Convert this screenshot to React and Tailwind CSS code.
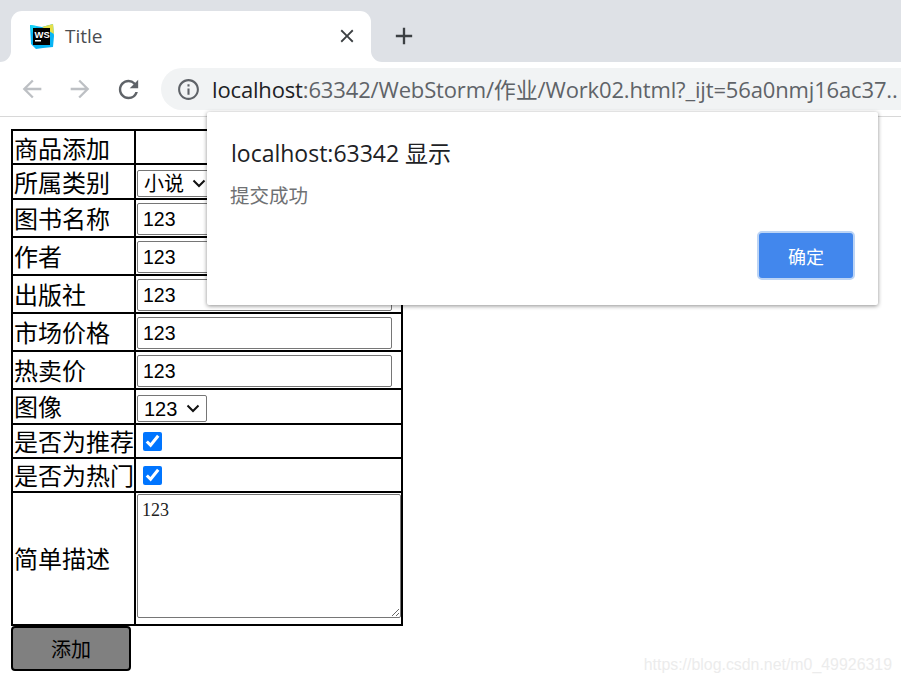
import React from "react";
import { MdArrowBack, MdArrowForward, MdRefresh, MdInfoOutline, MdClose, MdAdd } from "react-icons/md";

const cjk = "font-['Liberation_Sans','Noto_Sans_CJK_SC',sans-serif]";

const TextInput = () => (
  <input
    type="text"
    defaultValue="123"
    className="block w-[255px] h-[32px] mt-[2px] border border-[#767676] rounded-[2px] px-[5px] text-[19.5px] text-black outline-none"
  />
);

const Select = ({ children, wide }) => (
  <div className={`relative h-[27px] mt-[4px] ${wide ? "w-[80px]" : "w-[70px]"}`}>
    <select
      defaultValue={children}
      className="block appearance-none w-full h-full border border-[#767676] rounded-[2px] pl-[6px] text-[20px] text-black bg-white outline-none"
    >
      <option>{children}</option>
    </select>
    <svg
      width="14"
      height="9"
      viewBox="0 0 14 9"
      className={`absolute top-[9px] pointer-events-none ${wide ? "left-[55px]" : "left-[49px]"}`}
    >
      <path d="M1.5 1.5 L7 7 L12.5 1.5" fill="none" stroke="#111" strokeWidth="2" />
    </svg>
  </div>
);

const Check = () => (
  <input
    type="checkbox"
    defaultChecked
    className="block w-[19px] h-[19px] ml-[6px] accent-[#0075ff]"
  />
);

const rows = [
  { label: "商品添加", height: "h-[34px]", field: null, pad: "pt-[5px]" },
  { label: "所属类别", height: "h-[35px]", field: <Select wide>小说</Select>, pad: "pt-[4px]" },
  { label: "图书名称", height: "h-[38px]", field: <TextInput />, pad: "pt-[4px]" },
  { label: "作者", height: "h-[38px]", field: <TextInput />, pad: "pt-[4px]" },
  { label: "出版社", height: "h-[38px]", field: <TextInput />, pad: "pt-[4px]" },
  { label: "市场价格", height: "h-[38px]", field: <TextInput />, pad: "pt-[4px]" },
  { label: "热卖价", height: "h-[38px]", field: <TextInput />, pad: "pt-[4px]" },
  { label: "图像", height: "h-[35px]", field: <Select>123</Select>, pad: "pt-[2px]" },
  { label: "是否为推荐", height: "h-[34px]", field: <Check />, pad: "pt-[4px]" },
  { label: "是否为热门", height: "h-[34px]", field: <Check />, pad: "pt-[4px]" },
  {
    label: "简单描述",
    height: "h-[133px]",
    pad: "pt-[2px]",
    top: true,
    field: (
      <textarea
        defaultValue="123"
        className="block w-[264px] h-[124px] mt-[1px] border border-[#767676] rounded-[2px] px-[4px] py-[3px] text-[18px] leading-[24px] text-[#222] font-['Liberation_Serif',serif] outline-none"
      />
    ),
  },
];

const WsLogo = () => (
  <svg width="26" height="26" viewBox="0 0 26 26" className="shrink-0">
    <path d="M1 1 L13 3 L24 0 L25 12 L24 23 L14 24 L7 25 L2 20 Z" fill="#08b4f4" />
    <path d="M13 3 L24 0 L25 10 Z" fill="#e5e04a" />
    <path d="M1 1 L8 2 L3 9 Z" fill="#17d3f5" />
    <rect x="4" y="4" width="17" height="17" fill="#000" />
    <rect x="6" y="16" width="6" height="1.5" fill="#fff" />
    <text x="5.5" y="13.5" fontSize="9.5" fontWeight="700" fill="#fff" fontFamily="Liberation Sans, sans-serif">
      WS
    </text>
  </svg>
);

const Tab = () => (
  <div className="relative flex items-center w-[360px] h-[51px] bg-white rounded-t-[11px] pl-[18px] pr-[13px]">
    <div className="absolute left-[-11px] bottom-0 w-[11px] h-[11px] bg-white">
      <div className="w-full h-full bg-[#dee1e6] rounded-br-[11px]" />
    </div>
    <div className="absolute right-[-11px] bottom-0 w-[11px] h-[11px] bg-white">
      <div className="w-full h-full bg-[#dee1e6] rounded-bl-[11px]" />
    </div>
    <WsLogo />
    <span className="ml-[10px] text-[19px] text-[#4a4d51] font-['Open_Sans',sans-serif]">Title</span>
    <MdClose className="ml-auto mb-[1px] text-[#3c4043]" size={22} />
  </div>
);

const Dialog = () => (
  <div className="absolute left-[207px] top-[112px] w-[671px] h-[193px] bg-white rounded-[2px] shadow-[0_1px_4px_rgba(0,0,0,0.45)] pl-[24px] pr-[23px] pt-[26px]">
    <div className="text-[23px] leading-[30px] text-[#202124] font-['Open_Sans','Noto_Sans_CJK_SC',sans-serif]">
      localhost:63342 显示
    </div>
    <div className={`-ml-[1px] mt-[15px] text-[19.5px] leading-[26px] text-[#6f7174] ${cjk}`}>提交成功</div>
    <div className="flex justify-end mt-[22px]">
      <button className="w-[98px] h-[49px] pt-[1px] bg-[#4287ed] border-2 border-[#bcd4f5] rounded-[5px] text-white text-[18px] font-['Noto_Sans_CJK_SC',sans-serif]">
        确定
      </button>
    </div>
  </div>
);

export default function App() {
  return (
    <div className={`relative w-[901px] h-[681px] overflow-hidden bg-white ${cjk}`}>
      <div className="flex items-end h-[62px] bg-[#dee1e6] pl-[11px]">
        <Tab />
        <MdAdd className="ml-[19px] mb-[12px] text-[#3c4043]" size={28} />
      </div>

      <div className="flex items-center h-[55px] bg-white border-b border-[#d8d8d8] pl-[18px]">
        <MdArrowBack className="text-[#bdc0c4]" size={28} />
        <MdArrowForward className="ml-[20px] text-[#bdc0c4]" size={28} />
        <MdRefresh className="ml-[20px] text-[#5f6368]" size={29} />
        <div className="flex items-center flex-1 h-[42px] ml-[18px] bg-[#f1f3f4] rounded-l-[21px] pl-[15px] overflow-hidden">
          <MdInfoOutline className="shrink-0 text-[#5f6368]" size={25} />
          <div className="ml-[11px] whitespace-nowrap text-[22px] text-[#5f6368] font-['Open_Sans','Noto_Sans_CJK_SC',sans-serif] tracking-[-0.15px]">
            <span className="text-[#202124]">localhost</span>:63342/WebStorm/作业/Work02.html?_ijt=56a0nmj16ac37..
          </div>
        </div>
      </div>

      <table className="ml-[11px] mt-[12px] border-collapse text-[24px] leading-[24px] text-black">
        <tbody>
          {rows.map((row) => (
            <tr key={row.label} className={row.height}>
              <td className={`w-[122px] p-0 pl-[1px] border-2 border-black whitespace-nowrap ${row.pad}`}>{row.label}</td>
              <td className={`w-[267px] p-0 pl-[1px] border-2 border-black ${row.top ? "align-top" : ""}`}>{row.field}</td>
            </tr>
          ))}
        </tbody>
      </table>

      <button className="block ml-[11px] w-[120px] h-[45px] pt-[3px] bg-[#808080] border-2 border-black rounded-[4px] text-[20px] text-black">
        添加
      </button>

      <Dialog />

      <div className="absolute right-[9px] top-[653px] text-[15.9px] text-[#ececec] font-['Liberation_Sans',sans-serif]">
        https://blog.csdn.net/m0_49926319
      </div>
    </div>
  );
}
